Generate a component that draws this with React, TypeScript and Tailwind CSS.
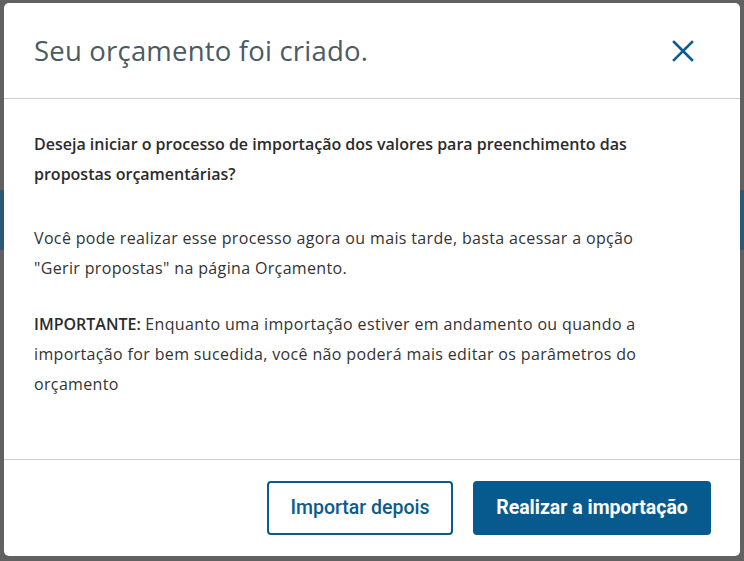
import React from 'react';

export default function App() {
  return (
    <div className="relative h-[561px] w-[744px] overflow-hidden bg-[#616161]" style={{ fontFamily: '"Open Sans", Lato, sans-serif' }}>
      {/* page behind the overlay */}
      <div className="absolute left-0 right-0 top-[190px] h-[60px] bg-[#2c5878]" />

      <div className="relative ml-[4px] mt-[3px] flex h-[553px] w-[736px] flex-col rounded-[5px] bg-white">
        <div className="flex h-[96px] items-center justify-between border-b border-[#cfcfcf] pl-[30px] pr-[46px]">
          <h1 className="text-[27.5px] font-normal tracking-[0.2px] text-[#4b5a63]">Seu orçamento foi criado.</h1>
          <button className="text-[#0b5b8d]">
            <svg width="22" height="22" viewBox="0 0 22 22" fill="none" stroke="currentColor" strokeWidth="2.6" strokeLinecap="square">
              <path d="M2 2 L20 20 M20 2 L2 20" />
            </svg>
          </button>
        </div>

        <div className="flex-1 px-[30px] pt-[30px] text-[16px] leading-[30px] tracking-[0.35px] text-[#333333]">
          <p className="font-semibold tracking-normal text-[#2b2b2b]">
            Deseja iniciar o processo de importação dos valores para preenchimento das
            <br />
            propostas orçamentárias?
          </p>
          <p className="mt-[34px]">
            Você pode realizar esse processo agora ou mais tarde, basta acessar a opção
            <br />
            "Gerir propostas" na página Orçamento.
          </p>
          <p className="mt-[26px]">
            <span className="font-semibold tracking-normal text-[#2b2b2b]">IMPORTANTE:</span> Enquanto uma importação estiver em andamento ou quando a
            <br />
            importação for bem sucedida, você não poderá mais editar os parâmetros do
            <br />
            orçamento
          </p>
        </div>

        <div className="flex h-[97px] items-center justify-end gap-[20px] border-t border-[#cfcfcf] pr-[29px]" style={{ fontFamily: 'Roboto, sans-serif' }}>
          <button className="h-[54px] w-[186px] rounded-[4px] border-2 border-[#0b5b8d] bg-white text-[19.5px] font-medium text-[#0b5b8d]">
            Importar depois
          </button>
          <button className="h-[54px] w-[238px] rounded-[4px] bg-[#075a8d] text-[19.5px] font-bold text-white">
            Realizar a importação
          </button>
        </div>
      </div>
    </div>
  );
}
